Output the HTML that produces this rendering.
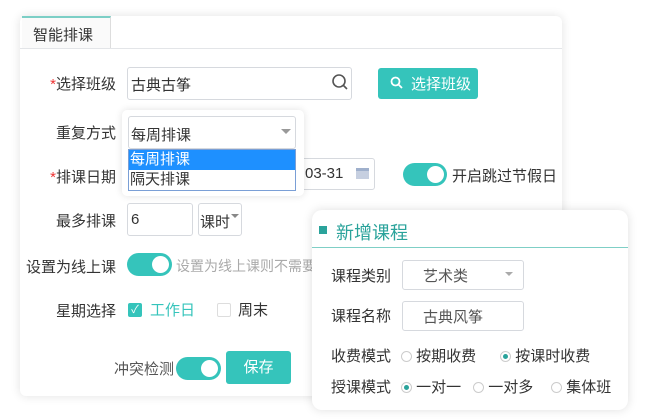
<!DOCTYPE html><html><head><meta charset="utf-8"><style>
*{box-sizing:border-box;margin:0;padding:0}
body{width:646px;height:420px;background:#fff;font-family:"Liberation Sans","Noto Sans CJK SC",sans-serif;position:relative;overflow:hidden;color:#333}
.a{position:absolute}
.panel{left:20px;top:16px;width:542px;height:380px;background:#fff;border-radius:6px;box-shadow:0 0 10px rgba(0,0,0,.12)}
.lbl{font-size:15px;text-align:right;width:100px;left:16px}
.inp{border:1px solid #d6d9de;border-radius:3px;background:#fff}
.tg{background:#35c4bb;border-radius:12px}
.tg::after{content:"";position:absolute;right:3px;top:3px;width:17px;height:17px;border-radius:50%;background:#fff}
.red{color:#e33}
.card{left:312px;top:210px;width:316px;height:200px;background:#fff;border-radius:10px;box-shadow:0 0 10px rgba(0,0,0,.13)}
.r{width:11px;height:11px;border:1px solid #ccc;border-radius:50%;display:inline-block;vertical-align:-1px;position:relative;margin-right:4px}
.r.on::after{content:"";position:absolute;left:2px;top:2px;width:5px;height:5px;border-radius:50%;background:#2aa39b}
</style></head><body>
<div class="a panel"></div>
<div class="a" style="left:22px;top:16px;width:89px;height:33px;border-top:2px solid #7ccfc6;border-right:1px solid #ddd;background:#fafafa;font-size:15px;padding:6px 0 0 11px">智能排课</div>
<div class="a" style="left:20px;top:48px;width:542px;height:1px;background:#e3e5e8"></div>

<div class="a lbl" style="top:73px"><span class="red">*</span>选择班级</div>
<div class="a inp" style="left:127px;top:67px;width:225px;height:33px;font-size:15px;padding:6px 0 0 3px">古典古筝</div>
<svg class="a" style="left:331px;top:73px" width="18" height="18"><circle cx="8" cy="8" r="6" fill="none" stroke="#555" stroke-width="1.6"/><line x1="12.5" y1="12.5" x2="16" y2="16" stroke="#555" stroke-width="1.6"/></svg>
<div class="a" style="left:378px;top:68px;width:100px;height:31px;background:#35c4bb;border-radius:3px;color:#fff;font-size:15px;padding:5px 0 0 33px">选择班级</div>
<svg class="a" style="left:390px;top:76px" width="14" height="14"><circle cx="5.5" cy="5.5" r="4" fill="none" stroke="#fff" stroke-width="1.8"/><line x1="8.5" y1="8.5" x2="12" y2="12" stroke="#fff" stroke-width="1.8"/></svg>

<div class="a lbl" style="top:122px">重复方式</div>
<div class="a lbl" style="top:166px"><span class="red">*</span>排课日期</div>
<div class="a inp" style="left:290px;top:158px;width:85px;height:32px;font-size:15px;padding:6px 0 0 14px">03-31</div>
<div class="a" style="left:356px;top:168px;width:13px;height:11px;background:#c6cfe0;border-top:3px solid #9fb0cc"></div>
<div class="a tg" style="left:403px;top:163px;width:44px;height:23px"></div>
<div class="a" style="left:452px;top:165px;font-size:15px">开启跳过节假日</div>

<div class="a" style="left:122px;top:110px;width:182px;height:86px;background:#fff;border-radius:5px;box-shadow:0 0 8px rgba(0,0,0,.12)"></div>
<div class="a inp" style="left:128px;top:116px;width:168px;height:33px;font-size:15px;padding:7px 0 0 2px">每周排课</div>
<div class="a" style="left:281px;top:129px;border:5px solid transparent;border-top:5px solid #999"></div>
<div class="a" style="left:128px;top:149px;width:168px;height:42px;border:1px solid #7a9fd6;background:#fff;font-size:15px;line-height:20px">
<div style="background:#1e90ff;color:#fff;padding-left:1px">每周排课</div><div style="padding-left:1px">隔天排课</div></div>

<div class="a lbl" style="top:210px">最多排课</div>
<div class="a inp" style="left:127px;top:203px;width:66px;height:33px;font-size:15px;padding:7px 0 0 3px">6</div>
<div class="a inp" style="left:198px;top:203px;width:44px;height:33px;font-size:15px;padding:7px 0 0 1px">课时</div>
<div class="a" style="left:231px;top:214px;border:4px solid transparent;border-top:4px solid #888"></div>

<div class="a lbl" style="top:256px">设置为线上课</div>
<div class="a tg" style="left:127px;top:253px;width:45px;height:23px"></div>
<div class="a" style="left:176px;top:256px;font-size:14px;color:#aaa;white-space:nowrap;width:136px;overflow:hidden">设置为线上课则不需要</div>

<div class="a lbl" style="top:300px">星期选择</div>
<div class="a" style="left:128px;top:303px;width:14px;height:14px;background:#35c4bb;border-radius:2px;color:#fff;font-size:11px;line-height:14px;text-align:center">✓</div>
<div class="a" style="left:150px;top:299px;font-size:15px;color:#35c4bb">工作日</div>
<div class="a" style="left:217px;top:303px;width:14px;height:14px;border:1px solid #ddd;border-radius:2px"></div>
<div class="a" style="left:238px;top:299px;font-size:15px">周末</div>

<div class="a" style="left:114px;top:358px;font-size:15px;color:#555">冲突检测</div>
<div class="a tg" style="left:176px;top:357px;width:45px;height:23px"></div>
<div class="a" style="left:226px;top:351px;width:65px;height:33px;background:#35c4bb;border-radius:3px;color:#fff;font-size:15px;text-align:center;line-height:33px">保存</div>

<div class="a card"></div>
<div class="a" style="left:319px;top:226px;width:8px;height:8px;background:#2aa39b"></div>
<div class="a" style="left:336px;top:219px;font-size:18px;color:#2aa39b">新增课程</div>
<div class="a" style="left:312px;top:247px;width:316px;height:1px;background:#7fcfc6"></div>
<div class="a" style="left:331px;top:265px;font-size:15px">课程类别</div>
<div class="a inp" style="left:402px;top:260px;width:122px;height:30px;font-size:15px;padding:4px 0 0 20px;color:#555">艺术类</div>
<div class="a" style="left:505px;top:272px;border:4px solid transparent;border-top:4px solid #aaa"></div>
<div class="a" style="left:331px;top:305px;font-size:15px">课程名称</div>
<div class="a inp" style="left:402px;top:301px;width:122px;height:30px;font-size:15px;padding:4px 0 0 20px;color:#555">古典风筝</div>
<div class="a" style="left:331px;top:345px;font-size:15px;white-space:nowrap">收费模式 <span style="display:inline-block;width:6px"></span><span class="r"></span>按期收费<span style="display:inline-block;width:24px"></span><span class="r on"></span>按课时收费</div>
<div class="a" style="left:331px;top:376px;font-size:15px;white-space:nowrap">授课模式 <span style="display:inline-block;width:6px"></span><span class="r on"></span>一对一<span style="display:inline-block;width:12px"></span><span class="r"></span>一对多<span style="display:inline-block;width:18px"></span><span class="r"></span>集体班</div>
</body></html>
